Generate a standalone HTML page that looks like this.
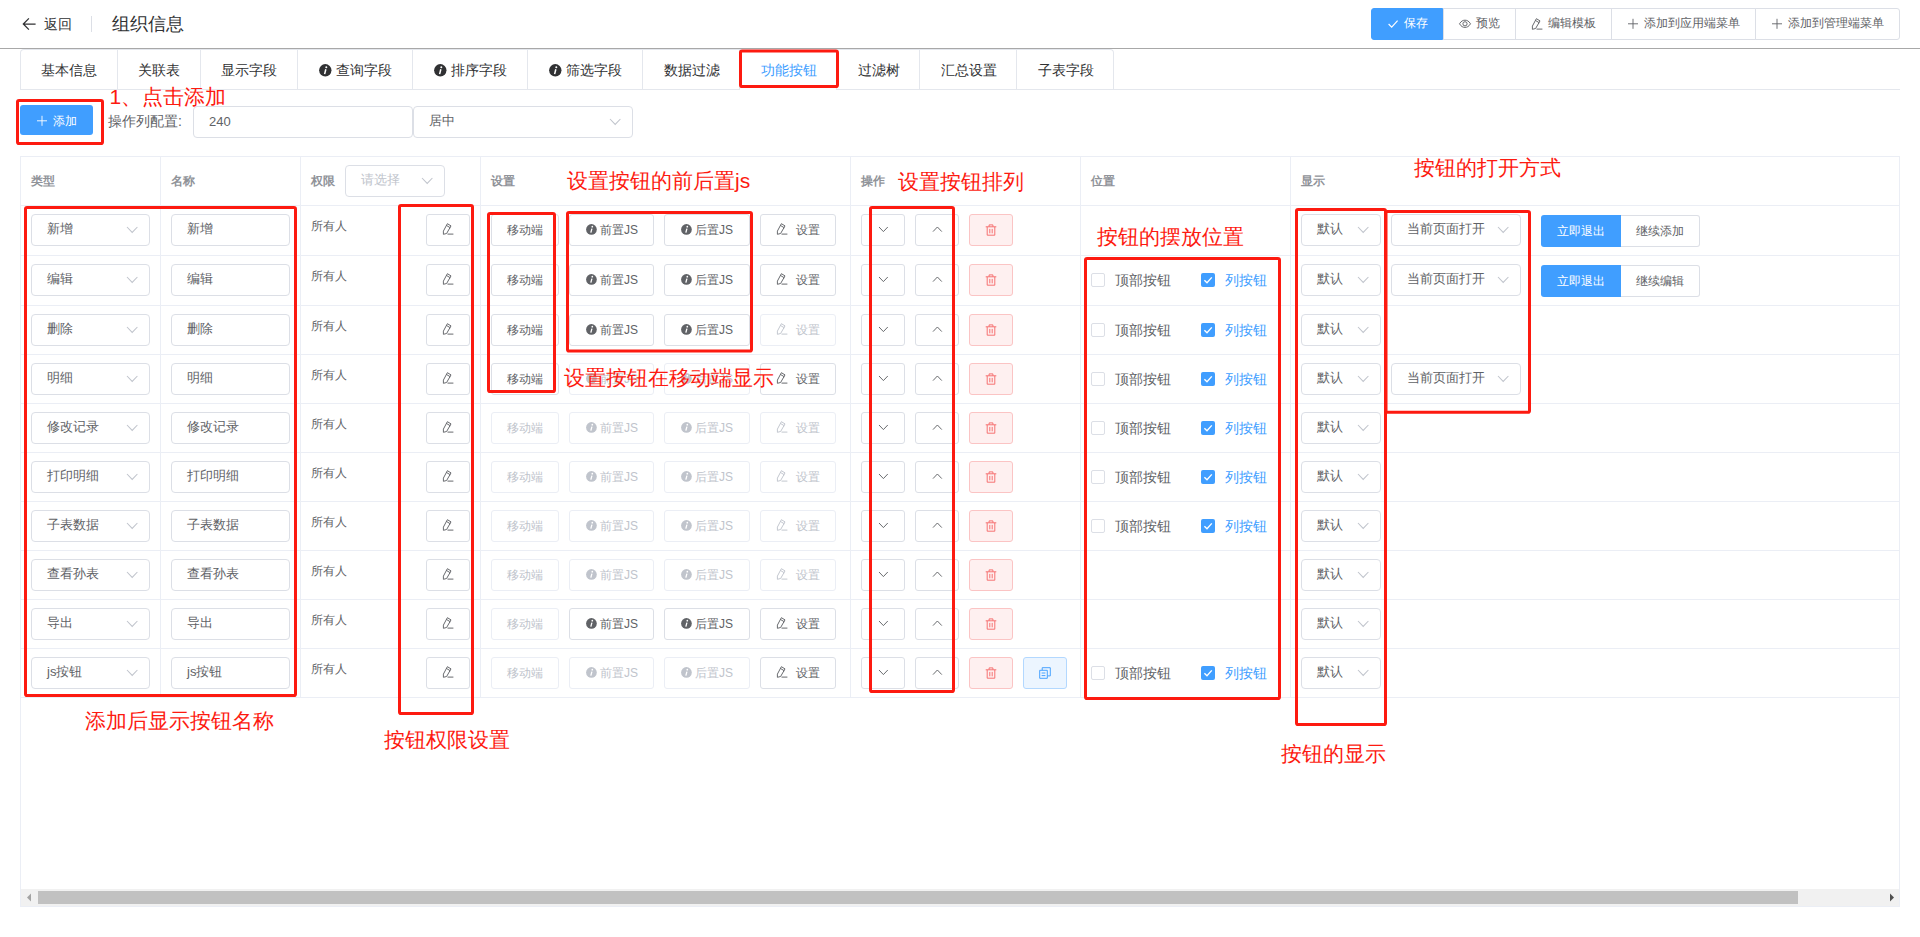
<!DOCTYPE html>
<html lang="zh"><head><meta charset="utf-8"><title>组织信息</title>
<style>
html,body{margin:0;padding:0;background:#fff}
body{width:1920px;height:937px;position:relative;overflow:hidden;font-family:"Liberation Sans",sans-serif}
body>div,body>svg{position:absolute;box-sizing:border-box}
svg{overflow:visible}
.t{white-space:nowrap}
</style></head><body>
<svg style="left:22px;top:17px" width="15" height="14" viewBox="0 0 15 14"><path d="M13.6 7 H1.4 M6.9 1.4 L1.3 7 L6.9 12.6" stroke="#303133" stroke-width="1.25" fill="none"/></svg>
<div class="t" style="left:44px;top:13.0px;height:22px;line-height:22px;font-size:14px;color:#303133;">返回</div>
<div style="left:91px;top:16px;width:1px;height:16px;background:#dcdfe6"></div>
<div class="t" style="left:112px;top:10.0px;height:28px;line-height:28px;font-size:18px;color:#303133;">组织信息</div>
<div style="left:1371px;top:8px;width:72px;height:32px;background:#409eff;border:1px solid #409eff;border-radius:3px 0 0 3px;z-index:2"></div>
<svg style="z-index:3;left:1387px;top:18px" width="12" height="12" viewBox="0 0 12 12"><path d="M1.6 6.0 L4.7 9.1 L10.6 2.6" stroke="#fff" stroke-width="1.15" fill="none"/></svg>
<div class="t" style="left:1404px;top:13.0px;height:20px;line-height:20px;font-size:12px;color:#fff;z-index:3;">保存</div>
<div style="left:1443px;top:8px;width:73px;height:32px;background:#fff;border:1px solid #dcdfe6;border-radius:0"></div>
<svg style="z-index:3;left:1459px;top:18px" width="12" height="12" viewBox="0 0 12 12"><g fill="none" stroke="#606266" stroke-width="0.95"><path d="M0.5 5.8 C2.2 3.0 4 2.2 6 2.2 C8 2.2 9.8 3.0 11.5 5.8 C9.8 8.6 8 9.4 6 9.4 C4 9.4 2.2 8.6 0.5 5.8 Z"/><circle cx="6" cy="5.8" r="2.1"/></g></svg>
<div class="t" style="left:1476px;top:13.0px;height:20px;line-height:20px;font-size:12px;color:#606266;z-index:3;">预览</div>
<div style="left:1515px;top:8px;width:97px;height:32px;background:#fff;border:1px solid #dcdfe6;border-radius:0"></div>
<svg style="z-index:3;left:1531px;top:18px" width="12" height="12" viewBox="0 0 12 12"><g fill="none" stroke="#606266" stroke-width="0.95" stroke-linejoin="round" stroke-linecap="round"><path d="M5.7 0.9 L9.0 2.9 L4.6 10.5 L1.4 11.3 L1.4 8.5 Z"/><path d="M4.7 2.6 L8.0 4.6"/><path d="M5.9 11.1 L11.0 11.1"/></g></svg>
<div class="t" style="left:1548px;top:13.0px;height:20px;line-height:20px;font-size:12px;color:#606266;z-index:3;">编辑模板</div>
<div style="left:1611px;top:8px;width:145px;height:32px;background:#fff;border:1px solid #dcdfe6;border-radius:0"></div>
<svg style="z-index:3;left:1627px;top:18px" width="12" height="12" viewBox="0 0 12 12"><path d="M6 0.8 V10.8 M1 5.8 H11" stroke="#606266" stroke-width="0.9" fill="none"/></svg>
<div class="t" style="left:1644px;top:13.0px;height:20px;line-height:20px;font-size:12px;color:#606266;z-index:3;">添加到应用端菜单</div>
<div style="left:1755px;top:8px;width:145px;height:32px;background:#fff;border:1px solid #dcdfe6;border-radius:0 3px 3px 0"></div>
<svg style="z-index:3;left:1771px;top:18px" width="12" height="12" viewBox="0 0 12 12"><path d="M6 0.8 V10.8 M1 5.8 H11" stroke="#606266" stroke-width="0.9" fill="none"/></svg>
<div class="t" style="left:1788px;top:13.0px;height:20px;line-height:20px;font-size:12px;color:#606266;z-index:3;">添加到管理端菜单</div>
<div style="left:0px;top:48px;width:1920px;height:1px;background:#a8a8a8"></div>
<div style="left:20px;top:89px;width:1880px;height:1px;background:#e4e7ed"></div>
<div style="left:20px;top:49px;width:1094px;height:41px;border:1px solid #e4e7ed;border-bottom:none;border-radius:4px 4px 0 0"></div>
<div class="t" style="left:41.0px;top:59.0px;height:22px;line-height:22px;font-size:14px;color:#303133;">基本信息</div>
<div style="left:117px;top:50px;width:1px;height:39px;background:#e4e7ed"></div>
<div class="t" style="left:138.09px;top:59.0px;height:22px;line-height:22px;font-size:14px;color:#303133;">关联表</div>
<div style="left:200px;top:50px;width:1px;height:39px;background:#e4e7ed"></div>
<div class="t" style="left:221.18px;top:59.0px;height:22px;line-height:22px;font-size:14px;color:#303133;">显示字段</div>
<div style="left:297px;top:50px;width:1px;height:39px;background:#e4e7ed"></div>
<svg style="left:318.96999999999997px;top:63.8px" width="12.6" height="12.6" viewBox="0 0 12 12"><circle cx="6" cy="6" r="5.9" fill="#303133"/><circle cx="6.95" cy="3.0" r="0.95" fill="#fff"/><path d="M6.5 5.0 L5.35 9.6" stroke="#fff" stroke-width="1.45" stroke-linecap="butt" fill="none"/></svg>
<div class="t" style="left:336.27px;top:59.0px;height:22px;line-height:22px;font-size:14px;color:#303133;">查询字段</div>
<div style="left:412px;top:50px;width:1px;height:39px;background:#e4e7ed"></div>
<svg style="left:434.06px;top:63.8px" width="12.6" height="12.6" viewBox="0 0 12 12"><circle cx="6" cy="6" r="5.9" fill="#303133"/><circle cx="6.95" cy="3.0" r="0.95" fill="#fff"/><path d="M6.5 5.0 L5.35 9.6" stroke="#fff" stroke-width="1.45" stroke-linecap="butt" fill="none"/></svg>
<div class="t" style="left:451.36px;top:59.0px;height:22px;line-height:22px;font-size:14px;color:#303133;">排序字段</div>
<div style="left:527px;top:50px;width:1px;height:39px;background:#e4e7ed"></div>
<svg style="left:549.1500000000001px;top:63.8px" width="12.6" height="12.6" viewBox="0 0 12 12"><circle cx="6" cy="6" r="5.9" fill="#303133"/><circle cx="6.95" cy="3.0" r="0.95" fill="#fff"/><path d="M6.5 5.0 L5.35 9.6" stroke="#fff" stroke-width="1.45" stroke-linecap="butt" fill="none"/></svg>
<div class="t" style="left:566.45px;top:59.0px;height:22px;line-height:22px;font-size:14px;color:#303133;">筛选字段</div>
<div style="left:642px;top:50px;width:1px;height:39px;background:#e4e7ed"></div>
<div class="t" style="left:663.54px;top:59.0px;height:22px;line-height:22px;font-size:14px;color:#303133;">数据过滤</div>
<div style="left:739px;top:50px;width:1px;height:39px;background:#e4e7ed"></div>
<div style="left:740px;top:89px;width:96px;height:1px;background:#fff"></div>
<div class="t" style="left:760.63px;top:59.0px;height:22px;line-height:22px;font-size:14px;color:#409eff;">功能按钮</div>
<div style="left:836px;top:50px;width:1px;height:39px;background:#e4e7ed"></div>
<div class="t" style="left:857.72px;top:59.0px;height:22px;line-height:22px;font-size:14px;color:#303133;">过滤树</div>
<div style="left:919px;top:50px;width:1px;height:39px;background:#e4e7ed"></div>
<div class="t" style="left:940.81px;top:59.0px;height:22px;line-height:22px;font-size:14px;color:#303133;">汇总设置</div>
<div style="left:1016px;top:50px;width:1px;height:39px;background:#e4e7ed"></div>
<div class="t" style="left:1037.9px;top:59.0px;height:22px;line-height:22px;font-size:14px;color:#303133;">子表字段</div>
<div style="left:20px;top:105px;width:73px;height:30px;background:#409eff;border-radius:3px"></div>
<svg style="left:36px;top:114.5px" width="12" height="12" viewBox="0 0 12 12"><path d="M6 0.8 V10.8 M1 5.8 H11" stroke="#fff" stroke-width="0.9" fill="none"/></svg>
<div class="t" style="left:53px;top:110.5px;height:20px;line-height:20px;font-size:12px;color:#fff;">添加</div>
<div class="t" style="left:108px;top:109.7px;height:22px;line-height:22px;font-size:14px;color:#606266;">操作列配置:</div>
<div style="left:193px;top:106px;width:220px;height:32px;border:1px solid #dcdfe6;border-radius:4px;background:#fff"></div>
<div class="t" style="left:209px;top:110.7px;height:21px;line-height:21px;font-size:13px;color:#606266;">240</div>
<div style="left:413px;top:106px;width:220px;height:32px;border:1px solid #dcdfe6;border-radius:4px;background:#fff"></div>
<div class="t" style="left:429px;top:109.9px;height:21px;line-height:21px;font-size:13px;color:#606266;">居中</div>
<svg style="left:609.3px;top:118.3px" width="12.4" height="7.4" viewBox="0 0 12.4 7.4"><path d="M1 1 L6.2 6.4 L11.4 1" stroke="#c0c4cc" stroke-width="1.05" fill="none"/></svg>
<div style="left:20px;top:156px;width:1880px;height:751px;border:1px solid #ebeef5"></div>
<div style="left:21px;top:205px;width:1878px;height:1px;background:#ebeef5"></div>
<div style="left:21px;top:255px;width:1878px;height:1px;background:#ebeef5"></div>
<div style="left:21px;top:305px;width:1878px;height:1px;background:#ebeef5"></div>
<div style="left:21px;top:354px;width:1878px;height:1px;background:#ebeef5"></div>
<div style="left:21px;top:403px;width:1878px;height:1px;background:#ebeef5"></div>
<div style="left:21px;top:452px;width:1878px;height:1px;background:#ebeef5"></div>
<div style="left:21px;top:501px;width:1878px;height:1px;background:#ebeef5"></div>
<div style="left:21px;top:550px;width:1878px;height:1px;background:#ebeef5"></div>
<div style="left:21px;top:599px;width:1878px;height:1px;background:#ebeef5"></div>
<div style="left:21px;top:648px;width:1878px;height:1px;background:#ebeef5"></div>
<div style="left:21px;top:697px;width:1878px;height:1px;background:#ebeef5"></div>
<div style="left:160px;top:157px;width:1px;height:540px;background:#ebeef5"></div>
<div style="left:300px;top:157px;width:1px;height:540px;background:#ebeef5"></div>
<div style="left:480px;top:157px;width:1px;height:540px;background:#ebeef5"></div>
<div style="left:850px;top:157px;width:1px;height:540px;background:#ebeef5"></div>
<div style="left:1080px;top:157px;width:1px;height:540px;background:#ebeef5"></div>
<div style="left:1290px;top:157px;width:1px;height:540px;background:#ebeef5"></div>
<div class="t" style="left:31px;top:170.5px;height:20px;line-height:20px;font-size:12px;color:#909399;font-weight:bold;">类型</div>
<div class="t" style="left:171px;top:170.5px;height:20px;line-height:20px;font-size:12px;color:#909399;font-weight:bold;">名称</div>
<div class="t" style="left:311px;top:170.5px;height:20px;line-height:20px;font-size:12px;color:#909399;font-weight:bold;">权限</div>
<div class="t" style="left:491px;top:170.5px;height:20px;line-height:20px;font-size:12px;color:#909399;font-weight:bold;">设置</div>
<div class="t" style="left:861px;top:170.5px;height:20px;line-height:20px;font-size:12px;color:#909399;font-weight:bold;">操作</div>
<div class="t" style="left:1091px;top:170.5px;height:20px;line-height:20px;font-size:12px;color:#909399;font-weight:bold;">位置</div>
<div class="t" style="left:1301px;top:170.5px;height:20px;line-height:20px;font-size:12px;color:#909399;font-weight:bold;">显示</div>
<div style="left:345px;top:165px;width:100px;height:32px;border:1px solid #dcdfe6;border-radius:4px;background:#fff"></div>
<div class="t" style="left:361px;top:169.1px;height:21px;line-height:21px;font-size:13px;color:#c0c4cc;">请选择</div>
<svg style="left:421.3px;top:177.3px" width="12.4" height="7.4" viewBox="0 0 12.4 7.4"><path d="M1 1 L6.2 6.4 L11.4 1" stroke="#c0c4cc" stroke-width="1.05" fill="none"/></svg>
<div style="left:31px;top:214px;width:119px;height:32px;border:1px solid #dcdfe6;border-radius:4px;background:#fff"></div>
<div class="t" style="left:47px;top:218.1px;height:21px;line-height:21px;font-size:13px;color:#606266;">新增</div>
<svg style="left:126.3px;top:226.3px" width="12.4" height="7.4" viewBox="0 0 12.4 7.4"><path d="M1 1 L6.2 6.4 L11.4 1" stroke="#c0c4cc" stroke-width="1.05" fill="none"/></svg>
<div style="left:171px;top:214px;width:119px;height:32px;border:1px solid #dcdfe6;border-radius:4px;background:#fff"></div>
<div class="t" style="left:187px;top:218.1px;height:21px;line-height:21px;font-size:13px;color:#606266;">新增</div>
<div class="t" style="left:311px;top:216.0px;height:20px;line-height:20px;font-size:12px;color:#606266;">所有人</div>
<div style="left:426px;top:214px;width:44px;height:32px;background:#fff;border:1px solid #dcdfe6;border-radius:3px"></div>
<svg style="left:442px;top:223.4px" width="12" height="12" viewBox="0 0 12 12"><g fill="none" stroke="#606266" stroke-width="0.95" stroke-linejoin="round" stroke-linecap="round"><path d="M5.7 0.9 L9.0 2.9 L4.6 10.5 L1.4 11.3 L1.4 8.5 Z"/><path d="M4.7 2.6 L8.0 4.6"/><path d="M5.9 11.1 L11.0 11.1"/></g></svg>
<div style="left:491px;top:214px;width:68px;height:32px;background:#fff;border:1px solid #dcdfe6;border-radius:3px"></div>
<div class="t" style="left:507px;top:219.5px;height:20px;line-height:20px;font-size:12px;color:#606266;">移动端</div>
<div style="left:569px;top:214px;width:85px;height:32px;background:#fff;border:1px solid #dcdfe6;border-radius:3px"></div>
<svg style="left:586.1px;top:224.1px" width="10.9" height="10.9" viewBox="0 0 12 12"><circle cx="6" cy="6" r="5.9" fill="#606266"/><circle cx="6.95" cy="3.0" r="0.95" fill="#fff"/><path d="M6.5 5.0 L5.35 9.6" stroke="#fff" stroke-width="1.45" stroke-linecap="butt" fill="none"/></svg>
<div class="t" style="left:600px;top:219.5px;height:20px;line-height:20px;font-size:12px;color:#606266;">前置JS</div>
<div style="left:664px;top:214px;width:86px;height:32px;background:#fff;border:1px solid #dcdfe6;border-radius:3px"></div>
<svg style="left:681.1px;top:224.1px" width="10.9" height="10.9" viewBox="0 0 12 12"><circle cx="6" cy="6" r="5.9" fill="#606266"/><circle cx="6.95" cy="3.0" r="0.95" fill="#fff"/><path d="M6.5 5.0 L5.35 9.6" stroke="#fff" stroke-width="1.45" stroke-linecap="butt" fill="none"/></svg>
<div class="t" style="left:695px;top:219.5px;height:20px;line-height:20px;font-size:12px;color:#606266;">后置JS</div>
<div style="left:760px;top:214px;width:76px;height:32px;background:#fff;border:1px solid #dcdfe6;border-radius:3px"></div>
<svg style="left:776px;top:223.4px" width="12" height="12" viewBox="0 0 12 12"><g fill="none" stroke="#606266" stroke-width="0.95" stroke-linejoin="round" stroke-linecap="round"><path d="M5.7 0.9 L9.0 2.9 L4.6 10.5 L1.4 11.3 L1.4 8.5 Z"/><path d="M4.7 2.6 L8.0 4.6"/><path d="M5.9 11.1 L11.0 11.1"/></g></svg>
<div class="t" style="left:796px;top:219.5px;height:20px;line-height:20px;font-size:12px;color:#606266;">设置</div>
<div style="left:861px;top:214px;width:44px;height:32px;background:#fff;border:1px solid #dcdfe6;border-radius:3px"></div>
<svg style="left:877.6px;top:226.1px" width="10.8" height="6.6" viewBox="0 0 10.8 6.6"><path d="M1 1 L5.4 5.6 L9.8 1" stroke="#606266" stroke-width="0.95" fill="none"/></svg>
<div style="left:915px;top:214px;width:44px;height:32px;background:#fff;border:1px solid #dcdfe6;border-radius:3px"></div>
<svg style="left:931.6px;top:226.1px" width="10.8" height="6.6" viewBox="0 0 10.8 6.6"><path d="M1 5.6 L5.4 1 L9.8 5.6" stroke="#606266" stroke-width="0.95" fill="none"/></svg>
<div style="left:969px;top:214px;width:44px;height:32px;background:#fef0f0;border:1px solid #fbc4c4;border-radius:3px"></div>
<svg style="left:985px;top:223.6px" width="12" height="12" viewBox="0 0 12 12"><g fill="none" stroke="#f56c6c" stroke-width="0.95"><path d="M0.7 2.8 H11.3"/><path d="M4.1 2.7 V0.9 H7.9 V2.7"/><path d="M2.2 2.9 V11.2 H9.8 V2.9"/><path d="M4.8 4.9 V9.3 M7.2 4.9 V9.3"/></g></svg>
<div style="left:1301px;top:214px;width:80px;height:32px;border:1px solid #dcdfe6;border-radius:4px;background:#fff"></div>
<div class="t" style="left:1317px;top:218.1px;height:21px;line-height:21px;font-size:13px;color:#606266;">默认</div>
<svg style="left:1357.3px;top:226.3px" width="12.4" height="7.4" viewBox="0 0 12.4 7.4"><path d="M1 1 L6.2 6.4 L11.4 1" stroke="#c0c4cc" stroke-width="1.05" fill="none"/></svg>
<div style="left:1391px;top:214px;width:130px;height:32px;border:1px solid #dcdfe6;border-radius:4px;background:#fff"></div>
<div class="t" style="left:1407px;top:218.1px;height:21px;line-height:21px;font-size:13px;color:#606266;">当前页面打开</div>
<svg style="left:1497.3px;top:226.3px" width="12.4" height="7.4" viewBox="0 0 12.4 7.4"><path d="M1 1 L6.2 6.4 L11.4 1" stroke="#c0c4cc" stroke-width="1.05" fill="none"/></svg>
<div style="left:1541px;top:215px;width:80px;height:32px;background:#409eff;border-radius:3px 0 0 3px"></div>
<div class="t" style="left:1557px;top:221.2px;height:20px;line-height:20px;font-size:12px;color:#fff;">立即退出</div>
<div style="left:1621px;top:215px;width:79px;height:32px;border:1px solid #dcdfe6;border-left:none;border-radius:0 3px 3px 0;background:#fff"></div>
<div class="t" style="left:1636px;top:221.2px;height:20px;line-height:20px;font-size:12px;color:#606266;">继续添加</div>
<div style="left:31px;top:264px;width:119px;height:32px;border:1px solid #dcdfe6;border-radius:4px;background:#fff"></div>
<div class="t" style="left:47px;top:268.1px;height:21px;line-height:21px;font-size:13px;color:#606266;">编辑</div>
<svg style="left:126.3px;top:276.3px" width="12.4" height="7.4" viewBox="0 0 12.4 7.4"><path d="M1 1 L6.2 6.4 L11.4 1" stroke="#c0c4cc" stroke-width="1.05" fill="none"/></svg>
<div style="left:171px;top:264px;width:119px;height:32px;border:1px solid #dcdfe6;border-radius:4px;background:#fff"></div>
<div class="t" style="left:187px;top:268.1px;height:21px;line-height:21px;font-size:13px;color:#606266;">编辑</div>
<div class="t" style="left:311px;top:266.0px;height:20px;line-height:20px;font-size:12px;color:#606266;">所有人</div>
<div style="left:426px;top:264px;width:44px;height:32px;background:#fff;border:1px solid #dcdfe6;border-radius:3px"></div>
<svg style="left:442px;top:273.4px" width="12" height="12" viewBox="0 0 12 12"><g fill="none" stroke="#606266" stroke-width="0.95" stroke-linejoin="round" stroke-linecap="round"><path d="M5.7 0.9 L9.0 2.9 L4.6 10.5 L1.4 11.3 L1.4 8.5 Z"/><path d="M4.7 2.6 L8.0 4.6"/><path d="M5.9 11.1 L11.0 11.1"/></g></svg>
<div style="left:491px;top:264px;width:68px;height:32px;background:#fff;border:1px solid #dcdfe6;border-radius:3px"></div>
<div class="t" style="left:507px;top:269.5px;height:20px;line-height:20px;font-size:12px;color:#606266;">移动端</div>
<div style="left:569px;top:264px;width:85px;height:32px;background:#fff;border:1px solid #dcdfe6;border-radius:3px"></div>
<svg style="left:586.1px;top:274.1px" width="10.9" height="10.9" viewBox="0 0 12 12"><circle cx="6" cy="6" r="5.9" fill="#606266"/><circle cx="6.95" cy="3.0" r="0.95" fill="#fff"/><path d="M6.5 5.0 L5.35 9.6" stroke="#fff" stroke-width="1.45" stroke-linecap="butt" fill="none"/></svg>
<div class="t" style="left:600px;top:269.5px;height:20px;line-height:20px;font-size:12px;color:#606266;">前置JS</div>
<div style="left:664px;top:264px;width:86px;height:32px;background:#fff;border:1px solid #dcdfe6;border-radius:3px"></div>
<svg style="left:681.1px;top:274.1px" width="10.9" height="10.9" viewBox="0 0 12 12"><circle cx="6" cy="6" r="5.9" fill="#606266"/><circle cx="6.95" cy="3.0" r="0.95" fill="#fff"/><path d="M6.5 5.0 L5.35 9.6" stroke="#fff" stroke-width="1.45" stroke-linecap="butt" fill="none"/></svg>
<div class="t" style="left:695px;top:269.5px;height:20px;line-height:20px;font-size:12px;color:#606266;">后置JS</div>
<div style="left:760px;top:264px;width:76px;height:32px;background:#fff;border:1px solid #dcdfe6;border-radius:3px"></div>
<svg style="left:776px;top:273.4px" width="12" height="12" viewBox="0 0 12 12"><g fill="none" stroke="#606266" stroke-width="0.95" stroke-linejoin="round" stroke-linecap="round"><path d="M5.7 0.9 L9.0 2.9 L4.6 10.5 L1.4 11.3 L1.4 8.5 Z"/><path d="M4.7 2.6 L8.0 4.6"/><path d="M5.9 11.1 L11.0 11.1"/></g></svg>
<div class="t" style="left:796px;top:269.5px;height:20px;line-height:20px;font-size:12px;color:#606266;">设置</div>
<div style="left:861px;top:264px;width:44px;height:32px;background:#fff;border:1px solid #dcdfe6;border-radius:3px"></div>
<svg style="left:877.6px;top:276.1px" width="10.8" height="6.6" viewBox="0 0 10.8 6.6"><path d="M1 1 L5.4 5.6 L9.8 1" stroke="#606266" stroke-width="0.95" fill="none"/></svg>
<div style="left:915px;top:264px;width:44px;height:32px;background:#fff;border:1px solid #dcdfe6;border-radius:3px"></div>
<svg style="left:931.6px;top:276.1px" width="10.8" height="6.6" viewBox="0 0 10.8 6.6"><path d="M1 5.6 L5.4 1 L9.8 5.6" stroke="#606266" stroke-width="0.95" fill="none"/></svg>
<div style="left:969px;top:264px;width:44px;height:32px;background:#fef0f0;border:1px solid #fbc4c4;border-radius:3px"></div>
<svg style="left:985px;top:273.6px" width="12" height="12" viewBox="0 0 12 12"><g fill="none" stroke="#f56c6c" stroke-width="0.95"><path d="M0.7 2.8 H11.3"/><path d="M4.1 2.7 V0.9 H7.9 V2.7"/><path d="M2.2 2.9 V11.2 H9.8 V2.9"/><path d="M4.8 4.9 V9.3 M7.2 4.9 V9.3"/></g></svg>
<div style="left:1091px;top:273px;width:14px;height:14px;border:1px solid #dcdfe6;border-radius:2px;background:#fff"></div>
<div class="t" style="left:1115px;top:268.5px;height:22px;line-height:22px;font-size:14px;color:#606266;">顶部按钮</div>
<div style="left:1201px;top:273px;width:14px;height:14px;background:#409eff;border-radius:2px"></div>
<svg style="left:1201px;top:273px" width="14" height="14" viewBox="0 0 14 14"><path d="M3.4 7.2 L6 9.8 L10.8 4.4" stroke="#fff" stroke-width="1.4" fill="none"/></svg>
<div class="t" style="left:1225px;top:268.5px;height:22px;line-height:22px;font-size:14px;color:#409eff;">列按钮</div>
<div style="left:1301px;top:264px;width:80px;height:32px;border:1px solid #dcdfe6;border-radius:4px;background:#fff"></div>
<div class="t" style="left:1317px;top:268.1px;height:21px;line-height:21px;font-size:13px;color:#606266;">默认</div>
<svg style="left:1357.3px;top:276.3px" width="12.4" height="7.4" viewBox="0 0 12.4 7.4"><path d="M1 1 L6.2 6.4 L11.4 1" stroke="#c0c4cc" stroke-width="1.05" fill="none"/></svg>
<div style="left:1391px;top:264px;width:130px;height:32px;border:1px solid #dcdfe6;border-radius:4px;background:#fff"></div>
<div class="t" style="left:1407px;top:268.1px;height:21px;line-height:21px;font-size:13px;color:#606266;">当前页面打开</div>
<svg style="left:1497.3px;top:276.3px" width="12.4" height="7.4" viewBox="0 0 12.4 7.4"><path d="M1 1 L6.2 6.4 L11.4 1" stroke="#c0c4cc" stroke-width="1.05" fill="none"/></svg>
<div style="left:1541px;top:265px;width:80px;height:32px;background:#409eff;border-radius:3px 0 0 3px"></div>
<div class="t" style="left:1557px;top:271.2px;height:20px;line-height:20px;font-size:12px;color:#fff;">立即退出</div>
<div style="left:1621px;top:265px;width:79px;height:32px;border:1px solid #dcdfe6;border-left:none;border-radius:0 3px 3px 0;background:#fff"></div>
<div class="t" style="left:1636px;top:271.2px;height:20px;line-height:20px;font-size:12px;color:#606266;">继续编辑</div>
<div style="left:31px;top:314px;width:119px;height:32px;border:1px solid #dcdfe6;border-radius:4px;background:#fff"></div>
<div class="t" style="left:47px;top:318.1px;height:21px;line-height:21px;font-size:13px;color:#606266;">删除</div>
<svg style="left:126.3px;top:326.3px" width="12.4" height="7.4" viewBox="0 0 12.4 7.4"><path d="M1 1 L6.2 6.4 L11.4 1" stroke="#c0c4cc" stroke-width="1.05" fill="none"/></svg>
<div style="left:171px;top:314px;width:119px;height:32px;border:1px solid #dcdfe6;border-radius:4px;background:#fff"></div>
<div class="t" style="left:187px;top:318.1px;height:21px;line-height:21px;font-size:13px;color:#606266;">删除</div>
<div class="t" style="left:311px;top:316.0px;height:20px;line-height:20px;font-size:12px;color:#606266;">所有人</div>
<div style="left:426px;top:314px;width:44px;height:32px;background:#fff;border:1px solid #dcdfe6;border-radius:3px"></div>
<svg style="left:442px;top:323.4px" width="12" height="12" viewBox="0 0 12 12"><g fill="none" stroke="#606266" stroke-width="0.95" stroke-linejoin="round" stroke-linecap="round"><path d="M5.7 0.9 L9.0 2.9 L4.6 10.5 L1.4 11.3 L1.4 8.5 Z"/><path d="M4.7 2.6 L8.0 4.6"/><path d="M5.9 11.1 L11.0 11.1"/></g></svg>
<div style="left:491px;top:314px;width:68px;height:32px;background:#fff;border:1px solid #dcdfe6;border-radius:3px"></div>
<div class="t" style="left:507px;top:319.5px;height:20px;line-height:20px;font-size:12px;color:#606266;">移动端</div>
<div style="left:569px;top:314px;width:85px;height:32px;background:#fff;border:1px solid #dcdfe6;border-radius:3px"></div>
<svg style="left:586.1px;top:324.1px" width="10.9" height="10.9" viewBox="0 0 12 12"><circle cx="6" cy="6" r="5.9" fill="#606266"/><circle cx="6.95" cy="3.0" r="0.95" fill="#fff"/><path d="M6.5 5.0 L5.35 9.6" stroke="#fff" stroke-width="1.45" stroke-linecap="butt" fill="none"/></svg>
<div class="t" style="left:600px;top:319.5px;height:20px;line-height:20px;font-size:12px;color:#606266;">前置JS</div>
<div style="left:664px;top:314px;width:86px;height:32px;background:#fff;border:1px solid #dcdfe6;border-radius:3px"></div>
<svg style="left:681.1px;top:324.1px" width="10.9" height="10.9" viewBox="0 0 12 12"><circle cx="6" cy="6" r="5.9" fill="#606266"/><circle cx="6.95" cy="3.0" r="0.95" fill="#fff"/><path d="M6.5 5.0 L5.35 9.6" stroke="#fff" stroke-width="1.45" stroke-linecap="butt" fill="none"/></svg>
<div class="t" style="left:695px;top:319.5px;height:20px;line-height:20px;font-size:12px;color:#606266;">后置JS</div>
<div style="left:760px;top:314px;width:76px;height:32px;background:#fff;border:1px solid #ebeef5;border-radius:3px"></div>
<svg style="left:776px;top:323.4px" width="12" height="12" viewBox="0 0 12 12"><g fill="none" stroke="#c0c4cc" stroke-width="0.95" stroke-linejoin="round" stroke-linecap="round"><path d="M5.7 0.9 L9.0 2.9 L4.6 10.5 L1.4 11.3 L1.4 8.5 Z"/><path d="M4.7 2.6 L8.0 4.6"/><path d="M5.9 11.1 L11.0 11.1"/></g></svg>
<div class="t" style="left:796px;top:319.5px;height:20px;line-height:20px;font-size:12px;color:#c0c4cc;">设置</div>
<div style="left:861px;top:314px;width:44px;height:32px;background:#fff;border:1px solid #dcdfe6;border-radius:3px"></div>
<svg style="left:877.6px;top:326.1px" width="10.8" height="6.6" viewBox="0 0 10.8 6.6"><path d="M1 1 L5.4 5.6 L9.8 1" stroke="#606266" stroke-width="0.95" fill="none"/></svg>
<div style="left:915px;top:314px;width:44px;height:32px;background:#fff;border:1px solid #dcdfe6;border-radius:3px"></div>
<svg style="left:931.6px;top:326.1px" width="10.8" height="6.6" viewBox="0 0 10.8 6.6"><path d="M1 5.6 L5.4 1 L9.8 5.6" stroke="#606266" stroke-width="0.95" fill="none"/></svg>
<div style="left:969px;top:314px;width:44px;height:32px;background:#fef0f0;border:1px solid #fbc4c4;border-radius:3px"></div>
<svg style="left:985px;top:323.6px" width="12" height="12" viewBox="0 0 12 12"><g fill="none" stroke="#f56c6c" stroke-width="0.95"><path d="M0.7 2.8 H11.3"/><path d="M4.1 2.7 V0.9 H7.9 V2.7"/><path d="M2.2 2.9 V11.2 H9.8 V2.9"/><path d="M4.8 4.9 V9.3 M7.2 4.9 V9.3"/></g></svg>
<div style="left:1091px;top:323px;width:14px;height:14px;border:1px solid #dcdfe6;border-radius:2px;background:#fff"></div>
<div class="t" style="left:1115px;top:318.5px;height:22px;line-height:22px;font-size:14px;color:#606266;">顶部按钮</div>
<div style="left:1201px;top:323px;width:14px;height:14px;background:#409eff;border-radius:2px"></div>
<svg style="left:1201px;top:323px" width="14" height="14" viewBox="0 0 14 14"><path d="M3.4 7.2 L6 9.8 L10.8 4.4" stroke="#fff" stroke-width="1.4" fill="none"/></svg>
<div class="t" style="left:1225px;top:318.5px;height:22px;line-height:22px;font-size:14px;color:#409eff;">列按钮</div>
<div style="left:1301px;top:314px;width:80px;height:32px;border:1px solid #dcdfe6;border-radius:4px;background:#fff"></div>
<div class="t" style="left:1317px;top:318.1px;height:21px;line-height:21px;font-size:13px;color:#606266;">默认</div>
<svg style="left:1357.3px;top:326.3px" width="12.4" height="7.4" viewBox="0 0 12.4 7.4"><path d="M1 1 L6.2 6.4 L11.4 1" stroke="#c0c4cc" stroke-width="1.05" fill="none"/></svg>
<div style="left:31px;top:363px;width:119px;height:32px;border:1px solid #dcdfe6;border-radius:4px;background:#fff"></div>
<div class="t" style="left:47px;top:367.1px;height:21px;line-height:21px;font-size:13px;color:#606266;">明细</div>
<svg style="left:126.3px;top:375.3px" width="12.4" height="7.4" viewBox="0 0 12.4 7.4"><path d="M1 1 L6.2 6.4 L11.4 1" stroke="#c0c4cc" stroke-width="1.05" fill="none"/></svg>
<div style="left:171px;top:363px;width:119px;height:32px;border:1px solid #dcdfe6;border-radius:4px;background:#fff"></div>
<div class="t" style="left:187px;top:367.1px;height:21px;line-height:21px;font-size:13px;color:#606266;">明细</div>
<div class="t" style="left:311px;top:365.0px;height:20px;line-height:20px;font-size:12px;color:#606266;">所有人</div>
<div style="left:426px;top:363px;width:44px;height:32px;background:#fff;border:1px solid #dcdfe6;border-radius:3px"></div>
<svg style="left:442px;top:372.4px" width="12" height="12" viewBox="0 0 12 12"><g fill="none" stroke="#606266" stroke-width="0.95" stroke-linejoin="round" stroke-linecap="round"><path d="M5.7 0.9 L9.0 2.9 L4.6 10.5 L1.4 11.3 L1.4 8.5 Z"/><path d="M4.7 2.6 L8.0 4.6"/><path d="M5.9 11.1 L11.0 11.1"/></g></svg>
<div style="left:491px;top:363px;width:68px;height:32px;background:#fff;border:1px solid #dcdfe6;border-radius:3px"></div>
<div class="t" style="left:507px;top:368.5px;height:20px;line-height:20px;font-size:12px;color:#606266;">移动端</div>
<div style="left:569px;top:363px;width:85px;height:32px;background:#fff;border:1px solid #ebeef5;border-radius:3px"></div>
<svg style="left:586.1px;top:373.1px" width="10.9" height="10.9" viewBox="0 0 12 12"><circle cx="6" cy="6" r="5.9" fill="#c0c4cc"/><circle cx="6.95" cy="3.0" r="0.95" fill="#fff"/><path d="M6.5 5.0 L5.35 9.6" stroke="#fff" stroke-width="1.45" stroke-linecap="butt" fill="none"/></svg>
<div class="t" style="left:600px;top:368.5px;height:20px;line-height:20px;font-size:12px;color:#c0c4cc;">前置JS</div>
<div style="left:664px;top:363px;width:86px;height:32px;background:#fff;border:1px solid #ebeef5;border-radius:3px"></div>
<svg style="left:681.1px;top:373.1px" width="10.9" height="10.9" viewBox="0 0 12 12"><circle cx="6" cy="6" r="5.9" fill="#c0c4cc"/><circle cx="6.95" cy="3.0" r="0.95" fill="#fff"/><path d="M6.5 5.0 L5.35 9.6" stroke="#fff" stroke-width="1.45" stroke-linecap="butt" fill="none"/></svg>
<div class="t" style="left:695px;top:368.5px;height:20px;line-height:20px;font-size:12px;color:#c0c4cc;">后置JS</div>
<div style="left:760px;top:363px;width:76px;height:32px;background:#fff;border:1px solid #dcdfe6;border-radius:3px"></div>
<svg style="left:776px;top:372.4px" width="12" height="12" viewBox="0 0 12 12"><g fill="none" stroke="#606266" stroke-width="0.95" stroke-linejoin="round" stroke-linecap="round"><path d="M5.7 0.9 L9.0 2.9 L4.6 10.5 L1.4 11.3 L1.4 8.5 Z"/><path d="M4.7 2.6 L8.0 4.6"/><path d="M5.9 11.1 L11.0 11.1"/></g></svg>
<div class="t" style="left:796px;top:368.5px;height:20px;line-height:20px;font-size:12px;color:#606266;">设置</div>
<div style="left:861px;top:363px;width:44px;height:32px;background:#fff;border:1px solid #dcdfe6;border-radius:3px"></div>
<svg style="left:877.6px;top:375.1px" width="10.8" height="6.6" viewBox="0 0 10.8 6.6"><path d="M1 1 L5.4 5.6 L9.8 1" stroke="#606266" stroke-width="0.95" fill="none"/></svg>
<div style="left:915px;top:363px;width:44px;height:32px;background:#fff;border:1px solid #dcdfe6;border-radius:3px"></div>
<svg style="left:931.6px;top:375.1px" width="10.8" height="6.6" viewBox="0 0 10.8 6.6"><path d="M1 5.6 L5.4 1 L9.8 5.6" stroke="#606266" stroke-width="0.95" fill="none"/></svg>
<div style="left:969px;top:363px;width:44px;height:32px;background:#fef0f0;border:1px solid #fbc4c4;border-radius:3px"></div>
<svg style="left:985px;top:372.6px" width="12" height="12" viewBox="0 0 12 12"><g fill="none" stroke="#f56c6c" stroke-width="0.95"><path d="M0.7 2.8 H11.3"/><path d="M4.1 2.7 V0.9 H7.9 V2.7"/><path d="M2.2 2.9 V11.2 H9.8 V2.9"/><path d="M4.8 4.9 V9.3 M7.2 4.9 V9.3"/></g></svg>
<div style="left:1091px;top:372px;width:14px;height:14px;border:1px solid #dcdfe6;border-radius:2px;background:#fff"></div>
<div class="t" style="left:1115px;top:367.5px;height:22px;line-height:22px;font-size:14px;color:#606266;">顶部按钮</div>
<div style="left:1201px;top:372px;width:14px;height:14px;background:#409eff;border-radius:2px"></div>
<svg style="left:1201px;top:372px" width="14" height="14" viewBox="0 0 14 14"><path d="M3.4 7.2 L6 9.8 L10.8 4.4" stroke="#fff" stroke-width="1.4" fill="none"/></svg>
<div class="t" style="left:1225px;top:367.5px;height:22px;line-height:22px;font-size:14px;color:#409eff;">列按钮</div>
<div style="left:1301px;top:363px;width:80px;height:32px;border:1px solid #dcdfe6;border-radius:4px;background:#fff"></div>
<div class="t" style="left:1317px;top:367.1px;height:21px;line-height:21px;font-size:13px;color:#606266;">默认</div>
<svg style="left:1357.3px;top:375.3px" width="12.4" height="7.4" viewBox="0 0 12.4 7.4"><path d="M1 1 L6.2 6.4 L11.4 1" stroke="#c0c4cc" stroke-width="1.05" fill="none"/></svg>
<div style="left:1391px;top:363px;width:130px;height:32px;border:1px solid #dcdfe6;border-radius:4px;background:#fff"></div>
<div class="t" style="left:1407px;top:367.1px;height:21px;line-height:21px;font-size:13px;color:#606266;">当前页面打开</div>
<svg style="left:1497.3px;top:375.3px" width="12.4" height="7.4" viewBox="0 0 12.4 7.4"><path d="M1 1 L6.2 6.4 L11.4 1" stroke="#c0c4cc" stroke-width="1.05" fill="none"/></svg>
<div style="left:31px;top:412px;width:119px;height:32px;border:1px solid #dcdfe6;border-radius:4px;background:#fff"></div>
<div class="t" style="left:47px;top:416.1px;height:21px;line-height:21px;font-size:13px;color:#606266;">修改记录</div>
<svg style="left:126.3px;top:424.3px" width="12.4" height="7.4" viewBox="0 0 12.4 7.4"><path d="M1 1 L6.2 6.4 L11.4 1" stroke="#c0c4cc" stroke-width="1.05" fill="none"/></svg>
<div style="left:171px;top:412px;width:119px;height:32px;border:1px solid #dcdfe6;border-radius:4px;background:#fff"></div>
<div class="t" style="left:187px;top:416.1px;height:21px;line-height:21px;font-size:13px;color:#606266;">修改记录</div>
<div class="t" style="left:311px;top:414.0px;height:20px;line-height:20px;font-size:12px;color:#606266;">所有人</div>
<div style="left:426px;top:412px;width:44px;height:32px;background:#fff;border:1px solid #dcdfe6;border-radius:3px"></div>
<svg style="left:442px;top:421.4px" width="12" height="12" viewBox="0 0 12 12"><g fill="none" stroke="#606266" stroke-width="0.95" stroke-linejoin="round" stroke-linecap="round"><path d="M5.7 0.9 L9.0 2.9 L4.6 10.5 L1.4 11.3 L1.4 8.5 Z"/><path d="M4.7 2.6 L8.0 4.6"/><path d="M5.9 11.1 L11.0 11.1"/></g></svg>
<div style="left:491px;top:412px;width:68px;height:32px;background:#fff;border:1px solid #ebeef5;border-radius:3px"></div>
<div class="t" style="left:507px;top:417.5px;height:20px;line-height:20px;font-size:12px;color:#c0c4cc;">移动端</div>
<div style="left:569px;top:412px;width:85px;height:32px;background:#fff;border:1px solid #ebeef5;border-radius:3px"></div>
<svg style="left:586.1px;top:422.1px" width="10.9" height="10.9" viewBox="0 0 12 12"><circle cx="6" cy="6" r="5.9" fill="#c0c4cc"/><circle cx="6.95" cy="3.0" r="0.95" fill="#fff"/><path d="M6.5 5.0 L5.35 9.6" stroke="#fff" stroke-width="1.45" stroke-linecap="butt" fill="none"/></svg>
<div class="t" style="left:600px;top:417.5px;height:20px;line-height:20px;font-size:12px;color:#c0c4cc;">前置JS</div>
<div style="left:664px;top:412px;width:86px;height:32px;background:#fff;border:1px solid #ebeef5;border-radius:3px"></div>
<svg style="left:681.1px;top:422.1px" width="10.9" height="10.9" viewBox="0 0 12 12"><circle cx="6" cy="6" r="5.9" fill="#c0c4cc"/><circle cx="6.95" cy="3.0" r="0.95" fill="#fff"/><path d="M6.5 5.0 L5.35 9.6" stroke="#fff" stroke-width="1.45" stroke-linecap="butt" fill="none"/></svg>
<div class="t" style="left:695px;top:417.5px;height:20px;line-height:20px;font-size:12px;color:#c0c4cc;">后置JS</div>
<div style="left:760px;top:412px;width:76px;height:32px;background:#fff;border:1px solid #ebeef5;border-radius:3px"></div>
<svg style="left:776px;top:421.4px" width="12" height="12" viewBox="0 0 12 12"><g fill="none" stroke="#c0c4cc" stroke-width="0.95" stroke-linejoin="round" stroke-linecap="round"><path d="M5.7 0.9 L9.0 2.9 L4.6 10.5 L1.4 11.3 L1.4 8.5 Z"/><path d="M4.7 2.6 L8.0 4.6"/><path d="M5.9 11.1 L11.0 11.1"/></g></svg>
<div class="t" style="left:796px;top:417.5px;height:20px;line-height:20px;font-size:12px;color:#c0c4cc;">设置</div>
<div style="left:861px;top:412px;width:44px;height:32px;background:#fff;border:1px solid #dcdfe6;border-radius:3px"></div>
<svg style="left:877.6px;top:424.1px" width="10.8" height="6.6" viewBox="0 0 10.8 6.6"><path d="M1 1 L5.4 5.6 L9.8 1" stroke="#606266" stroke-width="0.95" fill="none"/></svg>
<div style="left:915px;top:412px;width:44px;height:32px;background:#fff;border:1px solid #dcdfe6;border-radius:3px"></div>
<svg style="left:931.6px;top:424.1px" width="10.8" height="6.6" viewBox="0 0 10.8 6.6"><path d="M1 5.6 L5.4 1 L9.8 5.6" stroke="#606266" stroke-width="0.95" fill="none"/></svg>
<div style="left:969px;top:412px;width:44px;height:32px;background:#fef0f0;border:1px solid #fbc4c4;border-radius:3px"></div>
<svg style="left:985px;top:421.6px" width="12" height="12" viewBox="0 0 12 12"><g fill="none" stroke="#f56c6c" stroke-width="0.95"><path d="M0.7 2.8 H11.3"/><path d="M4.1 2.7 V0.9 H7.9 V2.7"/><path d="M2.2 2.9 V11.2 H9.8 V2.9"/><path d="M4.8 4.9 V9.3 M7.2 4.9 V9.3"/></g></svg>
<div style="left:1091px;top:421px;width:14px;height:14px;border:1px solid #dcdfe6;border-radius:2px;background:#fff"></div>
<div class="t" style="left:1115px;top:416.5px;height:22px;line-height:22px;font-size:14px;color:#606266;">顶部按钮</div>
<div style="left:1201px;top:421px;width:14px;height:14px;background:#409eff;border-radius:2px"></div>
<svg style="left:1201px;top:421px" width="14" height="14" viewBox="0 0 14 14"><path d="M3.4 7.2 L6 9.8 L10.8 4.4" stroke="#fff" stroke-width="1.4" fill="none"/></svg>
<div class="t" style="left:1225px;top:416.5px;height:22px;line-height:22px;font-size:14px;color:#409eff;">列按钮</div>
<div style="left:1301px;top:412px;width:80px;height:32px;border:1px solid #dcdfe6;border-radius:4px;background:#fff"></div>
<div class="t" style="left:1317px;top:416.1px;height:21px;line-height:21px;font-size:13px;color:#606266;">默认</div>
<svg style="left:1357.3px;top:424.3px" width="12.4" height="7.4" viewBox="0 0 12.4 7.4"><path d="M1 1 L6.2 6.4 L11.4 1" stroke="#c0c4cc" stroke-width="1.05" fill="none"/></svg>
<div style="left:31px;top:461px;width:119px;height:32px;border:1px solid #dcdfe6;border-radius:4px;background:#fff"></div>
<div class="t" style="left:47px;top:465.1px;height:21px;line-height:21px;font-size:13px;color:#606266;">打印明细</div>
<svg style="left:126.3px;top:473.3px" width="12.4" height="7.4" viewBox="0 0 12.4 7.4"><path d="M1 1 L6.2 6.4 L11.4 1" stroke="#c0c4cc" stroke-width="1.05" fill="none"/></svg>
<div style="left:171px;top:461px;width:119px;height:32px;border:1px solid #dcdfe6;border-radius:4px;background:#fff"></div>
<div class="t" style="left:187px;top:465.1px;height:21px;line-height:21px;font-size:13px;color:#606266;">打印明细</div>
<div class="t" style="left:311px;top:463.0px;height:20px;line-height:20px;font-size:12px;color:#606266;">所有人</div>
<div style="left:426px;top:461px;width:44px;height:32px;background:#fff;border:1px solid #dcdfe6;border-radius:3px"></div>
<svg style="left:442px;top:470.4px" width="12" height="12" viewBox="0 0 12 12"><g fill="none" stroke="#606266" stroke-width="0.95" stroke-linejoin="round" stroke-linecap="round"><path d="M5.7 0.9 L9.0 2.9 L4.6 10.5 L1.4 11.3 L1.4 8.5 Z"/><path d="M4.7 2.6 L8.0 4.6"/><path d="M5.9 11.1 L11.0 11.1"/></g></svg>
<div style="left:491px;top:461px;width:68px;height:32px;background:#fff;border:1px solid #ebeef5;border-radius:3px"></div>
<div class="t" style="left:507px;top:466.5px;height:20px;line-height:20px;font-size:12px;color:#c0c4cc;">移动端</div>
<div style="left:569px;top:461px;width:85px;height:32px;background:#fff;border:1px solid #ebeef5;border-radius:3px"></div>
<svg style="left:586.1px;top:471.1px" width="10.9" height="10.9" viewBox="0 0 12 12"><circle cx="6" cy="6" r="5.9" fill="#c0c4cc"/><circle cx="6.95" cy="3.0" r="0.95" fill="#fff"/><path d="M6.5 5.0 L5.35 9.6" stroke="#fff" stroke-width="1.45" stroke-linecap="butt" fill="none"/></svg>
<div class="t" style="left:600px;top:466.5px;height:20px;line-height:20px;font-size:12px;color:#c0c4cc;">前置JS</div>
<div style="left:664px;top:461px;width:86px;height:32px;background:#fff;border:1px solid #ebeef5;border-radius:3px"></div>
<svg style="left:681.1px;top:471.1px" width="10.9" height="10.9" viewBox="0 0 12 12"><circle cx="6" cy="6" r="5.9" fill="#c0c4cc"/><circle cx="6.95" cy="3.0" r="0.95" fill="#fff"/><path d="M6.5 5.0 L5.35 9.6" stroke="#fff" stroke-width="1.45" stroke-linecap="butt" fill="none"/></svg>
<div class="t" style="left:695px;top:466.5px;height:20px;line-height:20px;font-size:12px;color:#c0c4cc;">后置JS</div>
<div style="left:760px;top:461px;width:76px;height:32px;background:#fff;border:1px solid #ebeef5;border-radius:3px"></div>
<svg style="left:776px;top:470.4px" width="12" height="12" viewBox="0 0 12 12"><g fill="none" stroke="#c0c4cc" stroke-width="0.95" stroke-linejoin="round" stroke-linecap="round"><path d="M5.7 0.9 L9.0 2.9 L4.6 10.5 L1.4 11.3 L1.4 8.5 Z"/><path d="M4.7 2.6 L8.0 4.6"/><path d="M5.9 11.1 L11.0 11.1"/></g></svg>
<div class="t" style="left:796px;top:466.5px;height:20px;line-height:20px;font-size:12px;color:#c0c4cc;">设置</div>
<div style="left:861px;top:461px;width:44px;height:32px;background:#fff;border:1px solid #dcdfe6;border-radius:3px"></div>
<svg style="left:877.6px;top:473.1px" width="10.8" height="6.6" viewBox="0 0 10.8 6.6"><path d="M1 1 L5.4 5.6 L9.8 1" stroke="#606266" stroke-width="0.95" fill="none"/></svg>
<div style="left:915px;top:461px;width:44px;height:32px;background:#fff;border:1px solid #dcdfe6;border-radius:3px"></div>
<svg style="left:931.6px;top:473.1px" width="10.8" height="6.6" viewBox="0 0 10.8 6.6"><path d="M1 5.6 L5.4 1 L9.8 5.6" stroke="#606266" stroke-width="0.95" fill="none"/></svg>
<div style="left:969px;top:461px;width:44px;height:32px;background:#fef0f0;border:1px solid #fbc4c4;border-radius:3px"></div>
<svg style="left:985px;top:470.6px" width="12" height="12" viewBox="0 0 12 12"><g fill="none" stroke="#f56c6c" stroke-width="0.95"><path d="M0.7 2.8 H11.3"/><path d="M4.1 2.7 V0.9 H7.9 V2.7"/><path d="M2.2 2.9 V11.2 H9.8 V2.9"/><path d="M4.8 4.9 V9.3 M7.2 4.9 V9.3"/></g></svg>
<div style="left:1091px;top:470px;width:14px;height:14px;border:1px solid #dcdfe6;border-radius:2px;background:#fff"></div>
<div class="t" style="left:1115px;top:465.5px;height:22px;line-height:22px;font-size:14px;color:#606266;">顶部按钮</div>
<div style="left:1201px;top:470px;width:14px;height:14px;background:#409eff;border-radius:2px"></div>
<svg style="left:1201px;top:470px" width="14" height="14" viewBox="0 0 14 14"><path d="M3.4 7.2 L6 9.8 L10.8 4.4" stroke="#fff" stroke-width="1.4" fill="none"/></svg>
<div class="t" style="left:1225px;top:465.5px;height:22px;line-height:22px;font-size:14px;color:#409eff;">列按钮</div>
<div style="left:1301px;top:461px;width:80px;height:32px;border:1px solid #dcdfe6;border-radius:4px;background:#fff"></div>
<div class="t" style="left:1317px;top:465.1px;height:21px;line-height:21px;font-size:13px;color:#606266;">默认</div>
<svg style="left:1357.3px;top:473.3px" width="12.4" height="7.4" viewBox="0 0 12.4 7.4"><path d="M1 1 L6.2 6.4 L11.4 1" stroke="#c0c4cc" stroke-width="1.05" fill="none"/></svg>
<div style="left:31px;top:510px;width:119px;height:32px;border:1px solid #dcdfe6;border-radius:4px;background:#fff"></div>
<div class="t" style="left:47px;top:514.1px;height:21px;line-height:21px;font-size:13px;color:#606266;">子表数据</div>
<svg style="left:126.3px;top:522.3px" width="12.4" height="7.4" viewBox="0 0 12.4 7.4"><path d="M1 1 L6.2 6.4 L11.4 1" stroke="#c0c4cc" stroke-width="1.05" fill="none"/></svg>
<div style="left:171px;top:510px;width:119px;height:32px;border:1px solid #dcdfe6;border-radius:4px;background:#fff"></div>
<div class="t" style="left:187px;top:514.1px;height:21px;line-height:21px;font-size:13px;color:#606266;">子表数据</div>
<div class="t" style="left:311px;top:512.0px;height:20px;line-height:20px;font-size:12px;color:#606266;">所有人</div>
<div style="left:426px;top:510px;width:44px;height:32px;background:#fff;border:1px solid #dcdfe6;border-radius:3px"></div>
<svg style="left:442px;top:519.4px" width="12" height="12" viewBox="0 0 12 12"><g fill="none" stroke="#606266" stroke-width="0.95" stroke-linejoin="round" stroke-linecap="round"><path d="M5.7 0.9 L9.0 2.9 L4.6 10.5 L1.4 11.3 L1.4 8.5 Z"/><path d="M4.7 2.6 L8.0 4.6"/><path d="M5.9 11.1 L11.0 11.1"/></g></svg>
<div style="left:491px;top:510px;width:68px;height:32px;background:#fff;border:1px solid #ebeef5;border-radius:3px"></div>
<div class="t" style="left:507px;top:515.5px;height:20px;line-height:20px;font-size:12px;color:#c0c4cc;">移动端</div>
<div style="left:569px;top:510px;width:85px;height:32px;background:#fff;border:1px solid #ebeef5;border-radius:3px"></div>
<svg style="left:586.1px;top:520.1px" width="10.9" height="10.9" viewBox="0 0 12 12"><circle cx="6" cy="6" r="5.9" fill="#c0c4cc"/><circle cx="6.95" cy="3.0" r="0.95" fill="#fff"/><path d="M6.5 5.0 L5.35 9.6" stroke="#fff" stroke-width="1.45" stroke-linecap="butt" fill="none"/></svg>
<div class="t" style="left:600px;top:515.5px;height:20px;line-height:20px;font-size:12px;color:#c0c4cc;">前置JS</div>
<div style="left:664px;top:510px;width:86px;height:32px;background:#fff;border:1px solid #ebeef5;border-radius:3px"></div>
<svg style="left:681.1px;top:520.1px" width="10.9" height="10.9" viewBox="0 0 12 12"><circle cx="6" cy="6" r="5.9" fill="#c0c4cc"/><circle cx="6.95" cy="3.0" r="0.95" fill="#fff"/><path d="M6.5 5.0 L5.35 9.6" stroke="#fff" stroke-width="1.45" stroke-linecap="butt" fill="none"/></svg>
<div class="t" style="left:695px;top:515.5px;height:20px;line-height:20px;font-size:12px;color:#c0c4cc;">后置JS</div>
<div style="left:760px;top:510px;width:76px;height:32px;background:#fff;border:1px solid #ebeef5;border-radius:3px"></div>
<svg style="left:776px;top:519.4px" width="12" height="12" viewBox="0 0 12 12"><g fill="none" stroke="#c0c4cc" stroke-width="0.95" stroke-linejoin="round" stroke-linecap="round"><path d="M5.7 0.9 L9.0 2.9 L4.6 10.5 L1.4 11.3 L1.4 8.5 Z"/><path d="M4.7 2.6 L8.0 4.6"/><path d="M5.9 11.1 L11.0 11.1"/></g></svg>
<div class="t" style="left:796px;top:515.5px;height:20px;line-height:20px;font-size:12px;color:#c0c4cc;">设置</div>
<div style="left:861px;top:510px;width:44px;height:32px;background:#fff;border:1px solid #dcdfe6;border-radius:3px"></div>
<svg style="left:877.6px;top:522.1px" width="10.8" height="6.6" viewBox="0 0 10.8 6.6"><path d="M1 1 L5.4 5.6 L9.8 1" stroke="#606266" stroke-width="0.95" fill="none"/></svg>
<div style="left:915px;top:510px;width:44px;height:32px;background:#fff;border:1px solid #dcdfe6;border-radius:3px"></div>
<svg style="left:931.6px;top:522.1px" width="10.8" height="6.6" viewBox="0 0 10.8 6.6"><path d="M1 5.6 L5.4 1 L9.8 5.6" stroke="#606266" stroke-width="0.95" fill="none"/></svg>
<div style="left:969px;top:510px;width:44px;height:32px;background:#fef0f0;border:1px solid #fbc4c4;border-radius:3px"></div>
<svg style="left:985px;top:519.6px" width="12" height="12" viewBox="0 0 12 12"><g fill="none" stroke="#f56c6c" stroke-width="0.95"><path d="M0.7 2.8 H11.3"/><path d="M4.1 2.7 V0.9 H7.9 V2.7"/><path d="M2.2 2.9 V11.2 H9.8 V2.9"/><path d="M4.8 4.9 V9.3 M7.2 4.9 V9.3"/></g></svg>
<div style="left:1091px;top:519px;width:14px;height:14px;border:1px solid #dcdfe6;border-radius:2px;background:#fff"></div>
<div class="t" style="left:1115px;top:514.5px;height:22px;line-height:22px;font-size:14px;color:#606266;">顶部按钮</div>
<div style="left:1201px;top:519px;width:14px;height:14px;background:#409eff;border-radius:2px"></div>
<svg style="left:1201px;top:519px" width="14" height="14" viewBox="0 0 14 14"><path d="M3.4 7.2 L6 9.8 L10.8 4.4" stroke="#fff" stroke-width="1.4" fill="none"/></svg>
<div class="t" style="left:1225px;top:514.5px;height:22px;line-height:22px;font-size:14px;color:#409eff;">列按钮</div>
<div style="left:1301px;top:510px;width:80px;height:32px;border:1px solid #dcdfe6;border-radius:4px;background:#fff"></div>
<div class="t" style="left:1317px;top:514.1px;height:21px;line-height:21px;font-size:13px;color:#606266;">默认</div>
<svg style="left:1357.3px;top:522.3px" width="12.4" height="7.4" viewBox="0 0 12.4 7.4"><path d="M1 1 L6.2 6.4 L11.4 1" stroke="#c0c4cc" stroke-width="1.05" fill="none"/></svg>
<div style="left:31px;top:559px;width:119px;height:32px;border:1px solid #dcdfe6;border-radius:4px;background:#fff"></div>
<div class="t" style="left:47px;top:563.1px;height:21px;line-height:21px;font-size:13px;color:#606266;">查看孙表</div>
<svg style="left:126.3px;top:571.3px" width="12.4" height="7.4" viewBox="0 0 12.4 7.4"><path d="M1 1 L6.2 6.4 L11.4 1" stroke="#c0c4cc" stroke-width="1.05" fill="none"/></svg>
<div style="left:171px;top:559px;width:119px;height:32px;border:1px solid #dcdfe6;border-radius:4px;background:#fff"></div>
<div class="t" style="left:187px;top:563.1px;height:21px;line-height:21px;font-size:13px;color:#606266;">查看孙表</div>
<div class="t" style="left:311px;top:561.0px;height:20px;line-height:20px;font-size:12px;color:#606266;">所有人</div>
<div style="left:426px;top:559px;width:44px;height:32px;background:#fff;border:1px solid #dcdfe6;border-radius:3px"></div>
<svg style="left:442px;top:568.4px" width="12" height="12" viewBox="0 0 12 12"><g fill="none" stroke="#606266" stroke-width="0.95" stroke-linejoin="round" stroke-linecap="round"><path d="M5.7 0.9 L9.0 2.9 L4.6 10.5 L1.4 11.3 L1.4 8.5 Z"/><path d="M4.7 2.6 L8.0 4.6"/><path d="M5.9 11.1 L11.0 11.1"/></g></svg>
<div style="left:491px;top:559px;width:68px;height:32px;background:#fff;border:1px solid #ebeef5;border-radius:3px"></div>
<div class="t" style="left:507px;top:564.5px;height:20px;line-height:20px;font-size:12px;color:#c0c4cc;">移动端</div>
<div style="left:569px;top:559px;width:85px;height:32px;background:#fff;border:1px solid #ebeef5;border-radius:3px"></div>
<svg style="left:586.1px;top:569.1px" width="10.9" height="10.9" viewBox="0 0 12 12"><circle cx="6" cy="6" r="5.9" fill="#c0c4cc"/><circle cx="6.95" cy="3.0" r="0.95" fill="#fff"/><path d="M6.5 5.0 L5.35 9.6" stroke="#fff" stroke-width="1.45" stroke-linecap="butt" fill="none"/></svg>
<div class="t" style="left:600px;top:564.5px;height:20px;line-height:20px;font-size:12px;color:#c0c4cc;">前置JS</div>
<div style="left:664px;top:559px;width:86px;height:32px;background:#fff;border:1px solid #ebeef5;border-radius:3px"></div>
<svg style="left:681.1px;top:569.1px" width="10.9" height="10.9" viewBox="0 0 12 12"><circle cx="6" cy="6" r="5.9" fill="#c0c4cc"/><circle cx="6.95" cy="3.0" r="0.95" fill="#fff"/><path d="M6.5 5.0 L5.35 9.6" stroke="#fff" stroke-width="1.45" stroke-linecap="butt" fill="none"/></svg>
<div class="t" style="left:695px;top:564.5px;height:20px;line-height:20px;font-size:12px;color:#c0c4cc;">后置JS</div>
<div style="left:760px;top:559px;width:76px;height:32px;background:#fff;border:1px solid #ebeef5;border-radius:3px"></div>
<svg style="left:776px;top:568.4px" width="12" height="12" viewBox="0 0 12 12"><g fill="none" stroke="#c0c4cc" stroke-width="0.95" stroke-linejoin="round" stroke-linecap="round"><path d="M5.7 0.9 L9.0 2.9 L4.6 10.5 L1.4 11.3 L1.4 8.5 Z"/><path d="M4.7 2.6 L8.0 4.6"/><path d="M5.9 11.1 L11.0 11.1"/></g></svg>
<div class="t" style="left:796px;top:564.5px;height:20px;line-height:20px;font-size:12px;color:#c0c4cc;">设置</div>
<div style="left:861px;top:559px;width:44px;height:32px;background:#fff;border:1px solid #dcdfe6;border-radius:3px"></div>
<svg style="left:877.6px;top:571.1px" width="10.8" height="6.6" viewBox="0 0 10.8 6.6"><path d="M1 1 L5.4 5.6 L9.8 1" stroke="#606266" stroke-width="0.95" fill="none"/></svg>
<div style="left:915px;top:559px;width:44px;height:32px;background:#fff;border:1px solid #dcdfe6;border-radius:3px"></div>
<svg style="left:931.6px;top:571.1px" width="10.8" height="6.6" viewBox="0 0 10.8 6.6"><path d="M1 5.6 L5.4 1 L9.8 5.6" stroke="#606266" stroke-width="0.95" fill="none"/></svg>
<div style="left:969px;top:559px;width:44px;height:32px;background:#fef0f0;border:1px solid #fbc4c4;border-radius:3px"></div>
<svg style="left:985px;top:568.6px" width="12" height="12" viewBox="0 0 12 12"><g fill="none" stroke="#f56c6c" stroke-width="0.95"><path d="M0.7 2.8 H11.3"/><path d="M4.1 2.7 V0.9 H7.9 V2.7"/><path d="M2.2 2.9 V11.2 H9.8 V2.9"/><path d="M4.8 4.9 V9.3 M7.2 4.9 V9.3"/></g></svg>
<div style="left:1301px;top:559px;width:80px;height:32px;border:1px solid #dcdfe6;border-radius:4px;background:#fff"></div>
<div class="t" style="left:1317px;top:563.1px;height:21px;line-height:21px;font-size:13px;color:#606266;">默认</div>
<svg style="left:1357.3px;top:571.3px" width="12.4" height="7.4" viewBox="0 0 12.4 7.4"><path d="M1 1 L6.2 6.4 L11.4 1" stroke="#c0c4cc" stroke-width="1.05" fill="none"/></svg>
<div style="left:31px;top:608px;width:119px;height:32px;border:1px solid #dcdfe6;border-radius:4px;background:#fff"></div>
<div class="t" style="left:47px;top:612.1px;height:21px;line-height:21px;font-size:13px;color:#606266;">导出</div>
<svg style="left:126.3px;top:620.3px" width="12.4" height="7.4" viewBox="0 0 12.4 7.4"><path d="M1 1 L6.2 6.4 L11.4 1" stroke="#c0c4cc" stroke-width="1.05" fill="none"/></svg>
<div style="left:171px;top:608px;width:119px;height:32px;border:1px solid #dcdfe6;border-radius:4px;background:#fff"></div>
<div class="t" style="left:187px;top:612.1px;height:21px;line-height:21px;font-size:13px;color:#606266;">导出</div>
<div class="t" style="left:311px;top:610.0px;height:20px;line-height:20px;font-size:12px;color:#606266;">所有人</div>
<div style="left:426px;top:608px;width:44px;height:32px;background:#fff;border:1px solid #dcdfe6;border-radius:3px"></div>
<svg style="left:442px;top:617.4px" width="12" height="12" viewBox="0 0 12 12"><g fill="none" stroke="#606266" stroke-width="0.95" stroke-linejoin="round" stroke-linecap="round"><path d="M5.7 0.9 L9.0 2.9 L4.6 10.5 L1.4 11.3 L1.4 8.5 Z"/><path d="M4.7 2.6 L8.0 4.6"/><path d="M5.9 11.1 L11.0 11.1"/></g></svg>
<div style="left:491px;top:608px;width:68px;height:32px;background:#fff;border:1px solid #ebeef5;border-radius:3px"></div>
<div class="t" style="left:507px;top:613.5px;height:20px;line-height:20px;font-size:12px;color:#c0c4cc;">移动端</div>
<div style="left:569px;top:608px;width:85px;height:32px;background:#fff;border:1px solid #dcdfe6;border-radius:3px"></div>
<svg style="left:586.1px;top:618.1px" width="10.9" height="10.9" viewBox="0 0 12 12"><circle cx="6" cy="6" r="5.9" fill="#606266"/><circle cx="6.95" cy="3.0" r="0.95" fill="#fff"/><path d="M6.5 5.0 L5.35 9.6" stroke="#fff" stroke-width="1.45" stroke-linecap="butt" fill="none"/></svg>
<div class="t" style="left:600px;top:613.5px;height:20px;line-height:20px;font-size:12px;color:#606266;">前置JS</div>
<div style="left:664px;top:608px;width:86px;height:32px;background:#fff;border:1px solid #dcdfe6;border-radius:3px"></div>
<svg style="left:681.1px;top:618.1px" width="10.9" height="10.9" viewBox="0 0 12 12"><circle cx="6" cy="6" r="5.9" fill="#606266"/><circle cx="6.95" cy="3.0" r="0.95" fill="#fff"/><path d="M6.5 5.0 L5.35 9.6" stroke="#fff" stroke-width="1.45" stroke-linecap="butt" fill="none"/></svg>
<div class="t" style="left:695px;top:613.5px;height:20px;line-height:20px;font-size:12px;color:#606266;">后置JS</div>
<div style="left:760px;top:608px;width:76px;height:32px;background:#fff;border:1px solid #dcdfe6;border-radius:3px"></div>
<svg style="left:776px;top:617.4px" width="12" height="12" viewBox="0 0 12 12"><g fill="none" stroke="#606266" stroke-width="0.95" stroke-linejoin="round" stroke-linecap="round"><path d="M5.7 0.9 L9.0 2.9 L4.6 10.5 L1.4 11.3 L1.4 8.5 Z"/><path d="M4.7 2.6 L8.0 4.6"/><path d="M5.9 11.1 L11.0 11.1"/></g></svg>
<div class="t" style="left:796px;top:613.5px;height:20px;line-height:20px;font-size:12px;color:#606266;">设置</div>
<div style="left:861px;top:608px;width:44px;height:32px;background:#fff;border:1px solid #dcdfe6;border-radius:3px"></div>
<svg style="left:877.6px;top:620.1px" width="10.8" height="6.6" viewBox="0 0 10.8 6.6"><path d="M1 1 L5.4 5.6 L9.8 1" stroke="#606266" stroke-width="0.95" fill="none"/></svg>
<div style="left:915px;top:608px;width:44px;height:32px;background:#fff;border:1px solid #dcdfe6;border-radius:3px"></div>
<svg style="left:931.6px;top:620.1px" width="10.8" height="6.6" viewBox="0 0 10.8 6.6"><path d="M1 5.6 L5.4 1 L9.8 5.6" stroke="#606266" stroke-width="0.95" fill="none"/></svg>
<div style="left:969px;top:608px;width:44px;height:32px;background:#fef0f0;border:1px solid #fbc4c4;border-radius:3px"></div>
<svg style="left:985px;top:617.6px" width="12" height="12" viewBox="0 0 12 12"><g fill="none" stroke="#f56c6c" stroke-width="0.95"><path d="M0.7 2.8 H11.3"/><path d="M4.1 2.7 V0.9 H7.9 V2.7"/><path d="M2.2 2.9 V11.2 H9.8 V2.9"/><path d="M4.8 4.9 V9.3 M7.2 4.9 V9.3"/></g></svg>
<div style="left:1301px;top:608px;width:80px;height:32px;border:1px solid #dcdfe6;border-radius:4px;background:#fff"></div>
<div class="t" style="left:1317px;top:612.1px;height:21px;line-height:21px;font-size:13px;color:#606266;">默认</div>
<svg style="left:1357.3px;top:620.3px" width="12.4" height="7.4" viewBox="0 0 12.4 7.4"><path d="M1 1 L6.2 6.4 L11.4 1" stroke="#c0c4cc" stroke-width="1.05" fill="none"/></svg>
<div style="left:31px;top:657px;width:119px;height:32px;border:1px solid #dcdfe6;border-radius:4px;background:#fff"></div>
<div class="t" style="left:47px;top:661.1px;height:21px;line-height:21px;font-size:13px;color:#606266;">js按钮</div>
<svg style="left:126.3px;top:669.3px" width="12.4" height="7.4" viewBox="0 0 12.4 7.4"><path d="M1 1 L6.2 6.4 L11.4 1" stroke="#c0c4cc" stroke-width="1.05" fill="none"/></svg>
<div style="left:171px;top:657px;width:119px;height:32px;border:1px solid #dcdfe6;border-radius:4px;background:#fff"></div>
<div class="t" style="left:187px;top:661.1px;height:21px;line-height:21px;font-size:13px;color:#606266;">js按钮</div>
<div class="t" style="left:311px;top:659.0px;height:20px;line-height:20px;font-size:12px;color:#606266;">所有人</div>
<div style="left:426px;top:657px;width:44px;height:32px;background:#fff;border:1px solid #dcdfe6;border-radius:3px"></div>
<svg style="left:442px;top:666.4px" width="12" height="12" viewBox="0 0 12 12"><g fill="none" stroke="#606266" stroke-width="0.95" stroke-linejoin="round" stroke-linecap="round"><path d="M5.7 0.9 L9.0 2.9 L4.6 10.5 L1.4 11.3 L1.4 8.5 Z"/><path d="M4.7 2.6 L8.0 4.6"/><path d="M5.9 11.1 L11.0 11.1"/></g></svg>
<div style="left:491px;top:657px;width:68px;height:32px;background:#fff;border:1px solid #ebeef5;border-radius:3px"></div>
<div class="t" style="left:507px;top:662.5px;height:20px;line-height:20px;font-size:12px;color:#c0c4cc;">移动端</div>
<div style="left:569px;top:657px;width:85px;height:32px;background:#fff;border:1px solid #ebeef5;border-radius:3px"></div>
<svg style="left:586.1px;top:667.1px" width="10.9" height="10.9" viewBox="0 0 12 12"><circle cx="6" cy="6" r="5.9" fill="#c0c4cc"/><circle cx="6.95" cy="3.0" r="0.95" fill="#fff"/><path d="M6.5 5.0 L5.35 9.6" stroke="#fff" stroke-width="1.45" stroke-linecap="butt" fill="none"/></svg>
<div class="t" style="left:600px;top:662.5px;height:20px;line-height:20px;font-size:12px;color:#c0c4cc;">前置JS</div>
<div style="left:664px;top:657px;width:86px;height:32px;background:#fff;border:1px solid #ebeef5;border-radius:3px"></div>
<svg style="left:681.1px;top:667.1px" width="10.9" height="10.9" viewBox="0 0 12 12"><circle cx="6" cy="6" r="5.9" fill="#c0c4cc"/><circle cx="6.95" cy="3.0" r="0.95" fill="#fff"/><path d="M6.5 5.0 L5.35 9.6" stroke="#fff" stroke-width="1.45" stroke-linecap="butt" fill="none"/></svg>
<div class="t" style="left:695px;top:662.5px;height:20px;line-height:20px;font-size:12px;color:#c0c4cc;">后置JS</div>
<div style="left:760px;top:657px;width:76px;height:32px;background:#fff;border:1px solid #dcdfe6;border-radius:3px"></div>
<svg style="left:776px;top:666.4px" width="12" height="12" viewBox="0 0 12 12"><g fill="none" stroke="#606266" stroke-width="0.95" stroke-linejoin="round" stroke-linecap="round"><path d="M5.7 0.9 L9.0 2.9 L4.6 10.5 L1.4 11.3 L1.4 8.5 Z"/><path d="M4.7 2.6 L8.0 4.6"/><path d="M5.9 11.1 L11.0 11.1"/></g></svg>
<div class="t" style="left:796px;top:662.5px;height:20px;line-height:20px;font-size:12px;color:#606266;">设置</div>
<div style="left:861px;top:657px;width:44px;height:32px;background:#fff;border:1px solid #dcdfe6;border-radius:3px"></div>
<svg style="left:877.6px;top:669.1px" width="10.8" height="6.6" viewBox="0 0 10.8 6.6"><path d="M1 1 L5.4 5.6 L9.8 1" stroke="#606266" stroke-width="0.95" fill="none"/></svg>
<div style="left:915px;top:657px;width:44px;height:32px;background:#fff;border:1px solid #dcdfe6;border-radius:3px"></div>
<svg style="left:931.6px;top:669.1px" width="10.8" height="6.6" viewBox="0 0 10.8 6.6"><path d="M1 5.6 L5.4 1 L9.8 5.6" stroke="#606266" stroke-width="0.95" fill="none"/></svg>
<div style="left:969px;top:657px;width:44px;height:32px;background:#fef0f0;border:1px solid #fbc4c4;border-radius:3px"></div>
<svg style="left:985px;top:666.6px" width="12" height="12" viewBox="0 0 12 12"><g fill="none" stroke="#f56c6c" stroke-width="0.95"><path d="M0.7 2.8 H11.3"/><path d="M4.1 2.7 V0.9 H7.9 V2.7"/><path d="M2.2 2.9 V11.2 H9.8 V2.9"/><path d="M4.8 4.9 V9.3 M7.2 4.9 V9.3"/></g></svg>
<div style="left:1023px;top:657px;width:44px;height:32px;background:#ecf5ff;border:1px solid #b3d8ff;border-radius:3px"></div>
<svg style="left:1039px;top:666.6px" width="12" height="12" viewBox="0 0 12 12"><g fill="none" stroke="#409eff" stroke-width="0.95" stroke-linejoin="round"><path d="M0.7 3.3 H8.3 V11.3 H0.7 Z"/><path d="M3.2 3.1 V0.7 H11.3 V8.9 H8.5"/><path d="M2.6 6.0 H6.4 M2.6 8.6 H6.4"/></g></svg>
<div style="left:1091px;top:666px;width:14px;height:14px;border:1px solid #dcdfe6;border-radius:2px;background:#fff"></div>
<div class="t" style="left:1115px;top:661.5px;height:22px;line-height:22px;font-size:14px;color:#606266;">顶部按钮</div>
<div style="left:1201px;top:666px;width:14px;height:14px;background:#409eff;border-radius:2px"></div>
<svg style="left:1201px;top:666px" width="14" height="14" viewBox="0 0 14 14"><path d="M3.4 7.2 L6 9.8 L10.8 4.4" stroke="#fff" stroke-width="1.4" fill="none"/></svg>
<div class="t" style="left:1225px;top:661.5px;height:22px;line-height:22px;font-size:14px;color:#409eff;">列按钮</div>
<div style="left:1301px;top:657px;width:80px;height:32px;border:1px solid #dcdfe6;border-radius:4px;background:#fff"></div>
<div class="t" style="left:1317px;top:661.1px;height:21px;line-height:21px;font-size:13px;color:#606266;">默认</div>
<svg style="left:1357.3px;top:669.3px" width="12.4" height="7.4" viewBox="0 0 12.4 7.4"><path d="M1 1 L6.2 6.4 L11.4 1" stroke="#c0c4cc" stroke-width="1.05" fill="none"/></svg>
<div style="left:21px;top:889px;width:1878px;height:17px;background:#f1f1f1"></div>
<div style="left:38px;top:891px;width:1760px;height:13px;background:#c1c1c1"></div>
<svg style="left:26px;top:893px" width="6" height="9" viewBox="0 0 6 9"><path d="M5 0.5 L1 4.5 L5 8.5 Z" fill="#a3a3a3"/></svg>
<svg style="left:1889px;top:893px" width="6" height="9" viewBox="0 0 6 9"><path d="M1 0.5 L5 4.5 L1 8.5 Z" fill="#505050"/></svg>
<svg style="left:0;top:0;z-index:10" width="1920" height="937" viewBox="0 0 1920 937"><rect x="740.5" y="51.1" width="97" height="35.4" rx="1.6" fill="none" stroke="#fd1a10" stroke-width="3"/><rect x="17.5" y="100.5" width="85" height="43" rx="1.6" fill="none" stroke="#fd1a10" stroke-width="3"/><rect x="25.5" y="207.5" width="270" height="488" rx="1.6" fill="none" stroke="#fd1a10" stroke-width="3"/><rect x="399.5" y="205.5" width="73" height="508" rx="1.6" fill="none" stroke="#fd1a10" stroke-width="3"/><rect x="488.5" y="213.5" width="66" height="178" rx="1.6" fill="none" stroke="#fd1a10" stroke-width="3"/><rect x="567.5" y="212.5" width="184" height="138.5" rx="1.6" fill="none" stroke="#fd1a10" stroke-width="3"/><rect x="870.5" y="207.5" width="83" height="484" rx="1.6" fill="none" stroke="#fd1a10" stroke-width="3"/><rect x="1085.5" y="258.5" width="194" height="440" rx="1.6" fill="none" stroke="#fd1a10" stroke-width="3"/><rect x="1296.5" y="209.5" width="89" height="515" rx="1.6" fill="none" stroke="#fd1a10" stroke-width="3"/><rect x="1386.0" y="211.5" width="143.5" height="200.8" rx="1.6" fill="none" stroke="#fd1a10" stroke-width="3"/></svg>
<div class="t" style="left:109.5px;top:81.5px;height:30px;line-height:30px;font-size:21px;color:#fd1a10;z-index:11;">1、点击添加</div>
<div class="t" style="left:567px;top:165.5px;height:30px;line-height:30px;font-size:21px;color:#fd1a10;z-index:11;">设置按钮的前后置js</div>
<div class="t" style="left:898px;top:166.5px;height:30px;line-height:30px;font-size:21px;color:#fd1a10;z-index:11;">设置按钮排列</div>
<div class="t" style="left:1414px;top:152.5px;height:30px;line-height:30px;font-size:21px;color:#fd1a10;z-index:11;">按钮的打开方式</div>
<div class="t" style="left:1097px;top:221.5px;height:30px;line-height:30px;font-size:21px;color:#fd1a10;z-index:11;">按钮的摆放位置</div>
<div class="t" style="left:564px;top:363.2px;height:30px;line-height:30px;font-size:21px;color:#fd1a10;z-index:11;">设置按钮在移动端显示</div>
<div class="t" style="left:85px;top:705.5px;height:30px;line-height:30px;font-size:21px;color:#fd1a10;z-index:11;">添加后显示按钮名称</div>
<div class="t" style="left:384px;top:724.5px;height:30px;line-height:30px;font-size:21px;color:#fd1a10;z-index:11;">按钮权限设置</div>
<div class="t" style="left:1281px;top:738.5px;height:30px;line-height:30px;font-size:21px;color:#fd1a10;z-index:11;">按钮的显示</div>
</body></html>
